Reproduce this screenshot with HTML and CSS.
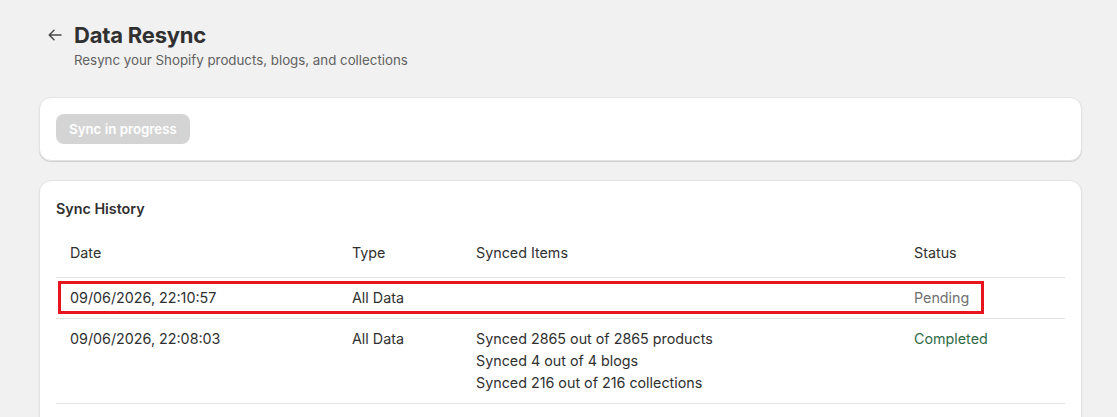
FILE: index.html
```html
<!DOCTYPE html>
<html>
<head>
<meta charset="utf-8">
<link rel="stylesheet" href="styles.css">
</head>
<body>
<div class="page">
  <header class="page-header">
    <button class="back" aria-label="Back">
      <svg viewBox="0 0 20 20" width="20" height="20"><path d="M16 10H4.5M9 5.2L4.2 10 9 14.8" fill="none" stroke="#4a4a4a" stroke-width="1.5" stroke-linecap="round" stroke-linejoin="round"/></svg>
    </button>
    <div class="titles">
      <h1 class="title">Data Resync</h1>
      <p class="subtitle">Resync your Shopify products, blogs, and collections</p>
    </div>
  </header>

  <section class="card card-action">
    <button class="btn-disabled" disabled>Sync in progress</button>
  </section>

  <section class="card card-history">
    <h2 class="card-title">Sync History</h2>
    <table class="history">
      <thead>
        <tr>
          <th class="c-date">Date</th>
          <th class="c-type">Type</th>
          <th class="c-items">Synced Items</th>
          <th class="c-status">Status</th>
        </tr>
      </thead>
      <tbody>
        <tr>
          <td>09/06/2026, 22:10:57</td>
          <td>All Data</td>
          <td></td>
          <td class="pending">Pending</td>
        </tr>
        <tr>
          <td>09/06/2026, 22:08:03</td>
          <td>All Data</td>
          <td>Synced 2865 out of 2865 products<br>Synced 4 out of 4 blogs<br>Synced 216 out of 216 collections</td>
          <td class="completed">Completed</td>
        </tr>
      </tbody>
    </table>
    <div class="highlight-box"></div>
  </section>
</div>
</body>
</html>
```

FILE: styles.css
```css
* { box-sizing: border-box; }
html, body { margin: 0; padding: 0; }
body {
  background: #f1f1f1;
  font-family: Inter, "Noto Sans", sans-serif;
  color: #303030;
  font-size: 14.3px;
}
.page {
  padding: 20px 35px 0 39px;
}
.page-header {
  display: flex;
  align-items: flex-start;
  gap: 8px;
  padding-left: 5px;
  margin-bottom: 27px;
}
.back {
  border: 0;
  background: transparent;
  padding: 0;
  width: 22px;
  height: 28px;
  display: flex;
  align-items: center;
  justify-content: center;
  margin-top: 1px;
}
.title {
  margin: 0;
  font-size: 22px;
  line-height: 30px;
  font-weight: 700;
  color: #303030;
  letter-spacing: -0.2px;
}
.subtitle {
  margin: 0;
  font-size: 13.3px;
  line-height: 20px;
  color: #616161;
}
.card {
  background: #fff;
  border-radius: 12px;
  border: 1px solid #e3e3e3;
  box-shadow: 0 1px 1px rgba(0,0,0,0.14);
}
.card-action {
  padding: 16px;
  margin-bottom: 19px;
}
.btn-disabled {
  display: block;
  font-family: inherit;
  font-size: 13.3px;
  font-weight: 600;
  color: #fff;
  background: #d4d4d4;
  border: 0;
  border-radius: 8px;
  height: 30px;
  padding: 0 13px;
}
.card-history {
  position: relative;
  padding: 16px 16px 0 16px;
  height: 260px;
}
.card-title {
  margin: 0 0 16px 0;
  font-size: 14.3px;
  line-height: 24px;
  font-weight: 600;
}
.history {
  width: 100%;
  border-collapse: collapse;
}
.history th, .history td {
  text-align: left;
  font-weight: 400;
  vertical-align: top;
  padding: 9px 14px;
  line-height: 22px;
}
.history th {
  padding: 5px 14px 13px;
}
.history tr { border-bottom: 1px solid #e3e3e3; }
.c-date { width: 282px; }
.c-type { width: 124px; }
.c-items { width: 438px; }
.pending { color: #707070; }
.completed { color: #2e6b45; }
.highlight-box {
  position: absolute;
  left: 18px;
  top: 100px;
  width: 926px;
  height: 33px;
  border: 3px solid #e8141e;
  pointer-events: none;
}
```
